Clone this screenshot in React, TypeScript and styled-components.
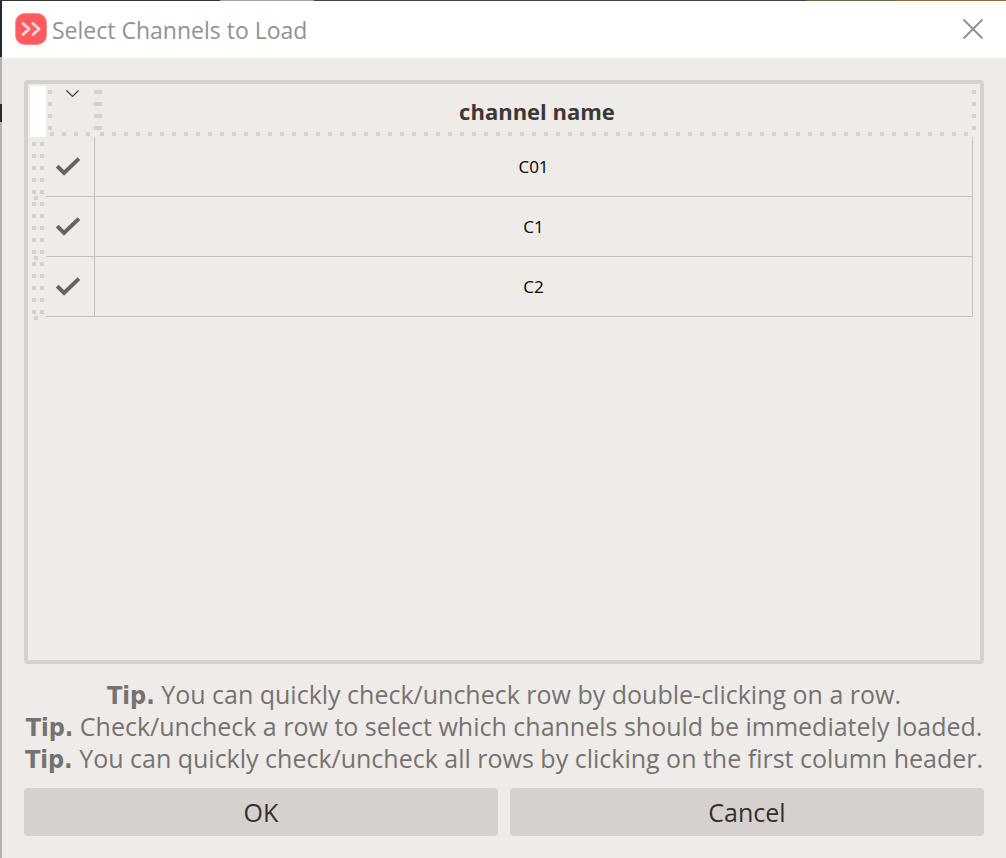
import React, { useState } from 'react';
import styled, { createGlobalStyle } from 'styled-components';

const LINE = '#c6c1be';
const MUTED = '#d6d1ce';
const PANEL = '#efebe8';

const column = `repeating-linear-gradient(to bottom, ${MUTED} 0 4px, transparent 4px 12px)`;
const row = `repeating-linear-gradient(to right, ${MUTED} 0 4px, transparent 4px 12px)`;

const GlobalStyle = createGlobalStyle`
  *, *::before, *::after { box-sizing: border-box; }
  body {
    margin: 0;
    background: linear-gradient(to bottom, #1f2a35 0 57px, #b4b1ae 57px 104px, #2a2928 104px 122px, #b4b1ae 122px);
  }
`;

const Desktop = styled.div`
  display: flex;
  min-height: 100vh;
  padding: 1px 0 0 2px;
  background: linear-gradient(to right, #35323a 0 220px, #a5a2a3 220px 314px, #45403f 314px 806px, #66683f 806px 896px, #8a6d45 896px) top / 100% 1px no-repeat;
`;

const Dialog = styled.main`
  display: flex;
  flex: 1;
  flex-direction: column;
  min-width: 0;
  background: ${PANEL};
`;

const TitleBar = styled.header`
  display: flex;
  align-items: center;
  gap: 5px;
  height: 57px;
  padding: 0 22px 2px 13px;
  background: #fff;
`;

const Title = styled.h1`
  flex: 1;
  margin: 0;
  padding-top: 2px;
  color: #929292;
  font: 400 23px/32px "Open Sans", "Noto Sans", sans-serif;
`;

const IconButton = styled.button`
  display: flex;
  padding: 0;
  border: 0;
  background: none;
  cursor: pointer;
`;

const Content = styled.div`
  display: flex;
  flex: 1;
  flex-direction: column;
  padding: 22px;
`;

const TableFrame = styled.div`
  flex: 1;
  padding: 2px 7px 2px 2px;
  border: 4px solid ${MUTED};
  border-radius: 4px;
`;

const Table = styled.table`
  width: 100%;
  border-collapse: separate;
  border-spacing: 0;
  table-layout: fixed;
`;

const Corner = styled.td`
  width: 16px;
  height: 51px;
  padding: 0;
  background: #fff;
`;

const CheckHeader = styled.th`
  width: 49px;
  padding: 4px 0 0 20px;
  vertical-align: top;
  background:
    ${column} 2px 4px / 4px 40px no-repeat,
    ${row} 4px 46px / 40px 4px no-repeat;
`;

const NameHeader = styled.th`
  position: relative;
  padding: 0 0 2px 6px;
  color: #3b3937;
  font: 700 22px/32px "Open Sans", "Noto Sans", sans-serif;
  background: ${row} 5px 46px / calc(100% - 10px) 4px no-repeat;

  &::before,
  &::after {
    position: absolute;
    top: 4px;
    height: 40px;
    background: ${column};
    content: "";
  }
  &::before { left: -1px; width: 8px; }
  &::after { right: -3px; width: 4px; }
`;

const RowHandle = styled.th`
  position: relative;
  height: 60px;
  padding: 0;
  background:
    ${column} 2px 5px / 4px 52px no-repeat,
    ${column} 10px 5px / 4px 52px no-repeat;

  &::after {
    position: absolute;
    bottom: -3px;
    left: 4px;
    width: 4px;
    height: 4px;
    background: ${MUTED};
    content: "";
  }
`;

const Cell = styled.td`
  padding: 0;
  border-right: 1px solid ${LINE};
  border-bottom: 1px solid ${LINE};
  color: #000;
  font: 400 17px/24px "Open Sans", "Noto Sans", sans-serif;
  text-align: center;
`;

const Toggle = styled.label`
  display: grid;
  width: 24px;
  height: 24px;
  margin-left: 10px;
  cursor: pointer;

  > * { grid-area: 1 / 1; }
`;

const Checkbox = styled.input`
  width: 24px;
  height: 24px;
  margin: 0;
  appearance: none;

  &:not(:checked) + svg { visibility: hidden; }
`;

const Tips = styled.div`
  margin: 14px 0;
  color: #757371;
  font: 400 25px/32px "Open Sans", "Noto Sans", sans-serif;
  text-align: center;

  strong {
    font-family: "DejaVu Sans Condensed", "Noto Sans", sans-serif;
    line-height: 1;
  }
`;

const Tip = styled.p`
  margin: 0;
`;

const Actions = styled.div`
  display: grid;
  grid-template-columns: 1fr 1fr;
  gap: 12px;
`;

const ActionButton = styled.button`
  height: 48px;
  padding: 0;
  border: 0;
  border-radius: 4px;
  background: ${MUTED};
  color: #333130;
  font: 400 25px/32px "Open Sans", "Noto Sans", sans-serif;
  cursor: pointer;
`;

const tips = [
  'You can quickly check/uncheck row by double-clicking on a row.',
  'Check/uncheck a row to select which channels should be immediately loaded.',
  'You can quickly check/uncheck all rows by clicking on the first column header.',
];

function Logo() {
  return (
    <svg width="32" height="32" viewBox="0 0 32 32" aria-hidden="true">
      <rect x="0.500" y="0.500" width="31" height="31" rx="9" fill="#ff5a5f" stroke="#ff8f92" />
      <path d="M8 10.500l6 5.500-6 5.500M18 10.500l6 5.500-6 5.500" fill="none" stroke="#ffd3d4" strokeWidth="3" strokeLinecap="round" strokeLinejoin="round" />
    </svg>
  );
}

export default function App() {
  const [channels, setChannels] = useState([
    { name: 'C01', checked: true },
    { name: 'C1', checked: true },
    { name: 'C2', checked: true },
  ]);

  const toggle = (name: string) =>
    setChannels(list => list.map(c => (c.name === name ? { ...c, checked: !c.checked } : c)));

  const toggleAll = () =>
    setChannels(list => {
      const checked = !list.every(c => c.checked);
      return list.map(c => ({ ...c, checked }));
    });

  return (
    <>
      <GlobalStyle />
      <Desktop>
        <Dialog>
          <TitleBar>
            <Logo />
            <Title>Select Channels to Load</Title>
            <IconButton type="button" aria-label="Close">
              <svg width="22" height="22" viewBox="0 0 22 22" aria-hidden="true">
                <path d="M1.500 1.500l19 19M20.500 1.500l-19 19" stroke="#8f8f8f" strokeWidth="1.800" />
              </svg>
            </IconButton>
          </TitleBar>
          <Content>
            <TableFrame>
              <Table>
                <thead>
                  <tr>
                    <Corner />
                    <CheckHeader scope="col">
                      <IconButton type="button" aria-label="Check or uncheck all rows" onClick={toggleAll}>
                        <svg width="14" height="8" viewBox="0 0 14 8" aria-hidden="true">
                          <path d="M0.500 0.500L6.500 6.500l6-6" fill="none" stroke="#333" strokeWidth="1.100" />
                        </svg>
                      </IconButton>
                    </CheckHeader>
                    <NameHeader scope="col">channel name</NameHeader>
                  </tr>
                </thead>
                <tbody>
                  {channels.map(c => (
                    <tr key={c.name} onDoubleClick={() => toggle(c.name)}>
                      <RowHandle scope="row" aria-label={c.name} />
                      <Cell>
                        <Toggle>
                          <Checkbox
                            type="checkbox"
                            aria-label={`Load ${c.name}`}
                            checked={c.checked}
                            onChange={() => toggle(c.name)}
                          />
                          <svg width="24" height="24" viewBox="0 0 24 24" aria-hidden="true">
                            <path d="M2.500 12.500l5.500 5.500L21.500 5" fill="none" stroke="#666361" strokeWidth="4" strokeLinecap="square" />
                          </svg>
                        </Toggle>
                      </Cell>
                      <Cell>{c.name}</Cell>
                    </tr>
                  ))}
                </tbody>
              </Table>
            </TableFrame>
            <Tips>
              {tips.map(tip => (
                <Tip key={tip}>
                  <strong>Tip.</strong> {tip}
                </Tip>
              ))}
            </Tips>
            <Actions>
              <ActionButton type="button">OK</ActionButton>
              <ActionButton type="button">Cancel</ActionButton>
            </Actions>
          </Content>
        </Dialog>
      </Desktop>
    </>
  );
}
